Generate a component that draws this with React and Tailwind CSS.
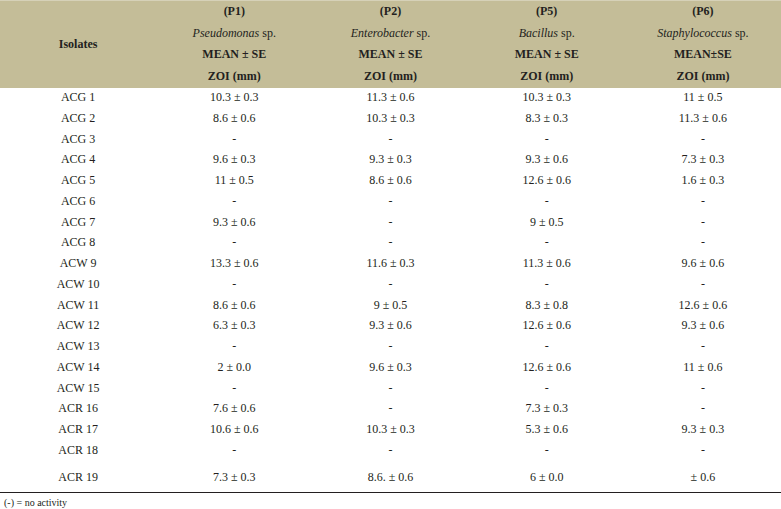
const columns = [
  { code: "(P1)", genus: "Pseudomonas", stat: "MEAN ± SE" },
  { code: "(P2)", genus: "Enterobacter", stat: "MEAN ± SE" },
  { code: "(P5)", genus: "Bacillus", stat: "MEAN ± SE" },
  { code: "(P6)", genus: "Staphylococcus", stat: "MEAN±SE" },
];

const rows = [
  ["ACG 1", "10.3 ± 0.3", "11.3 ± 0.6", "10.3 ± 0.3", "11 ± 0.5"],
  ["ACG 2", "8.6 ± 0.6", "10.3 ± 0.3", "8.3 ± 0.3", "11.3 ± 0.6"],
  ["ACG 3", "-", "-", "-", "-"],
  ["ACG 4", "9.6 ± 0.3", "9.3 ± 0.3", "9.3 ± 0.6", "7.3 ± 0.3"],
  ["ACG 5", "11 ± 0.5", "8.6 ± 0.6", "12.6 ± 0.6", "1.6 ± 0.3"],
  ["ACG 6", "-", "-", "-", "-"],
  ["ACG 7", "9.3 ± 0.6", "-", "9 ± 0.5", "-"],
  ["ACG 8", "-", "-", "-", "-"],
  ["ACW 9", "13.3 ± 0.6", "11.6 ± 0.3", "11.3 ± 0.6", "9.6 ± 0.6"],
  ["ACW 10", "-", "-", "-", "-"],
  ["ACW 11", "8.6 ± 0.6", "9 ± 0.5", "8.3 ± 0.8", "12.6 ± 0.6"],
  ["ACW 12", "6.3 ± 0.3", "9.3 ± 0.6", "12.6 ± 0.6", "9.3 ± 0.6"],
  ["ACW 13", "-", "-", "-", "-"],
  ["ACW 14", "2 ± 0.0", "9.6 ± 0.3", "12.6 ± 0.6", "11 ± 0.6"],
  ["ACW 15", "-", "-", "-", "-"],
  ["ACR 16", "7.6 ± 0.6", "-", "7.3 ± 0.3", "-"],
  ["ACR 17", "10.6 ± 0.6", "10.3 ± 0.3", "5.3 ± 0.6", "9.3 ± 0.3"],
  ["ACR 18", "-", "-", "-", "-"],
];

const last = ["ACR 19", "7.3 ± 0.3", "8.6. ± 0.6", "6 ± 0.0", "± 0.6"];

export default function App() {
  return (
    <div className="w-[781px] h-[509px] bg-white text-[#231f20] font-['Liberation_Serif',serif] text-[12px]">
      {/* Header */}
      <div className="grid grid-cols-5 h-[88px] bg-[#c4bd98] border-t border-[#d6d1b8] font-bold">
        <div className="flex items-center justify-center pb-[1px]">Isolates</div>
        {columns.map((c) => (
          <div key={c.code} className="flex flex-col items-center leading-[21.5px] pt-[0px]">
            <span>{c.code}</span>
            <span className="font-normal">
              <i>{c.genus}</i> sp.
            </span>
            <span>{c.stat}</span>
            <span>ZOI (mm)</span>
          </div>
        ))}
      </div>

      {/* Body */}
      <div className="pt-[0px]">
        {rows.map((r) => (
          <div key={r[0]} className="grid grid-cols-5 h-[20.75px] leading-[19px] text-center">
            {r.map((v, i) => (
              <span key={i}>{v}</span>
            ))}
          </div>
        ))}
        <div className="grid grid-cols-5 h-[31px] items-center text-center border-b border-[#231f20]">
          {last.map((v, i) => (
            <span key={i}>{v}</span>
          ))}
        </div>
      </div>

      <div className="px-[4px] pt-[4px] text-[10px] leading-[12px]">(-) = no activity</div>
    </div>
  );
}
